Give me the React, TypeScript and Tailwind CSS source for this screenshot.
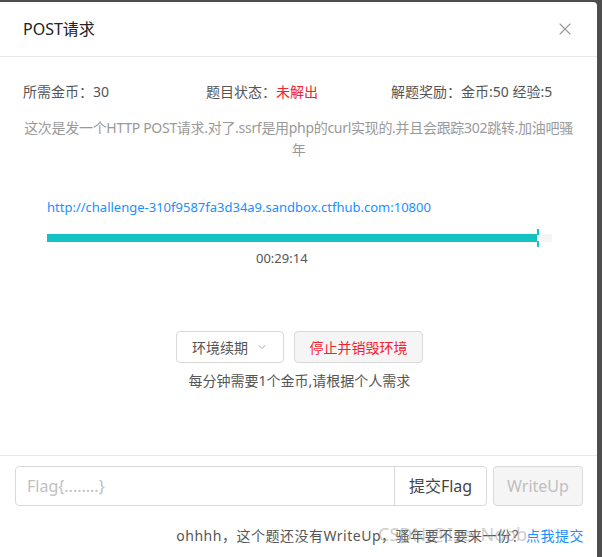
import React from 'react';
import { X, ChevronDown } from 'lucide-react';

export default function App() {
  const font = { fontFamily: '"Noto Sans", "Noto Sans CJK SC", sans-serif' };
  return (
    <div className="w-[602px] h-[557px] bg-[#4d4d4d] pt-[2px] pr-[5px] overflow-hidden" style={font}>
      <div className="relative h-[560px] bg-white rounded-tr-[4px] text-[#333]">
        {/* header */}
        <div className="h-[55px] flex items-center justify-between pl-[23px] pr-[22px] border-b border-[#e8e8e8]">
          <span className="text-[16px] text-[#222]">POST请求</span>
          <X className="w-[20px] h-[20px] text-[#999]" strokeWidth={1.3} />
        </div>

        {/* body */}
        <div className="h-[399px] border-b border-[#e8e8e8]">
          <div className="flex pl-[23px] pt-[24px] text-[14px] text-[#555] leading-[22px]">
            <span className="w-[183px]">所需金币：30</span>
            <span className="w-[185px]">
              题目状态：<span className="text-[#f5222d]">未解出</span>
            </span>
            <span>解题奖励：金币:50 经验:5</span>
          </div>
          <p className="mt-[14px] px-[18px] text-center text-[14px] tracking-[-0.3px] leading-[22px] text-[#999]">
            这次是发一个HTTP POST请求.对了.ssrf是用php的curl实现的.并且会跟踪302跳转.加油吧骚年
          </p>

          <div className="mt-[35px] pl-[47px] pr-[45px]">
            <div className="text-[13px] text-[#1890ff] leading-[22px]">
              http://challenge-310f9587fa3d34a9.sandbox.ctfhub.com:10800
            </div>
            <div className="mt-[11px] flex items-center h-[18px]">
              <div className="w-[490px] h-[8px] bg-[#13c2c2]" />
              <div className="w-[2px] h-[18px] bg-[#13c2c2] flex flex-col justify-center">
                <div className="h-[6px] bg-white" />
              </div>
              <div className="flex-1 h-[8px] bg-[#f5f5f5]" />
            </div>
            <div className="pl-[209px] text-[13px] text-[#555] leading-[22px]">00:29:14</div>
          </div>

          <div className="mt-[62px] flex justify-center gap-[10px] pl-[2px]">
            <button className="w-[108px] h-[32px] border border-[#d9d9d9] rounded-[4px] bg-white text-[14px] text-[#555] flex items-center justify-center gap-[8px]">
              环境续期
              <ChevronDown className="w-[12px] h-[12px] text-[#888]" strokeWidth={1.5} />
            </button>
            <button className="w-[129px] h-[32px] border border-[#d9d9d9] rounded-[4px] bg-[#f5f5f5] text-[14px] text-[#f5222d]">
              停止并销毁环境
            </button>
          </div>
          <div className="mt-[7px] text-center text-[14px] text-[#555] leading-[22px] pl-[2px]">
            每分钟需要1个金币,请根据个人需求
          </div>
        </div>

        {/* footer */}
        <div className="pt-[10px] pl-[15px] pr-[13px] flex">
          <div className="flex w-[472px] h-[40px] border border-[#d9d9d9] rounded-[4px]">
            <div className="flex-1 flex items-center pl-[11px] text-[16px] text-[#bfbfbf]">Flag{'{........}'}</div>
            <div className="w-[92px] border-l border-[#d9d9d9] flex items-center justify-center text-[16px] text-[#444]">
              提交Flag
            </div>
          </div>
          <div className="ml-[6px] w-[90px] h-[40px] border border-[#d9d9d9] rounded-[4px] bg-[#f5f5f5] flex items-center justify-center text-[16px] text-[#bfbfbf]">
            WriteUp
          </div>
        </div>
        <div className="mt-[19px] pr-[13px] text-right text-[14px] tracking-[0.5px] leading-[22px] text-[#555]">
          ohhhh，这个题还没有WriteUp，骚年要不要来一份？<span className="text-[#1890ff]">点我提交</span>
        </div>
        <div className="absolute left-[378px] top-[520px] text-[18px] leading-[24px] text-[#999]/50 pointer-events-none">
          CSDN @IsecNoob
        </div>
      </div>
    </div>
  );
}
